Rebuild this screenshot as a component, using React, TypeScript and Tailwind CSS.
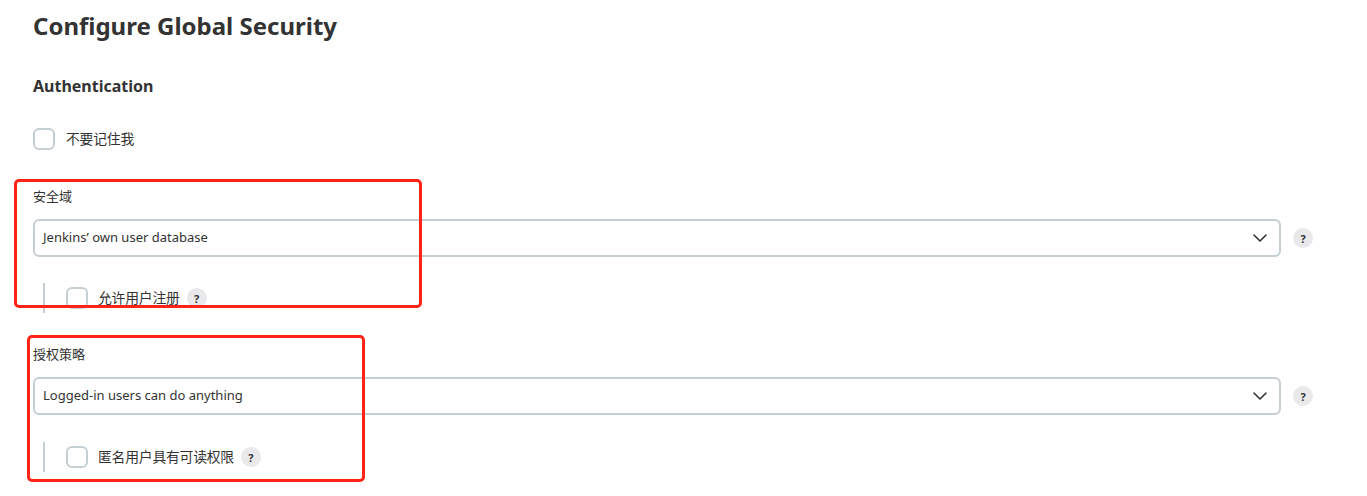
import React from "react";

const font = { fontFamily: '"Noto Sans", "Noto Sans CJK SC", sans-serif' };

function Help({ className = "" }: { className?: string }) {
  return (
    <span
      className={`inline-flex h-[20px] w-[20px] shrink-0 items-center justify-center rounded-full bg-[#e9e9eb] text-[11px] font-bold leading-none text-[#333] ${className}`}
    >
      ?
    </span>
  );
}

function Checkbox() {
  return <span className="inline-block h-[22px] w-[22px] shrink-0 rounded-[6px] border-2 border-[#c5ced3] bg-white" />;
}

function Select({ value }: { value: string }) {
  return (
    <div className="flex items-center gap-[12px]">
      <div className="flex h-[38px] w-[1248px] items-center justify-between rounded-[6px] border-2 border-[#c5ced3] bg-white pl-[8px] pr-[12px]">
        <span className="text-[13px] text-[#333]">{value}</span>
        <svg width="14" height="8" viewBox="0 0 14 8" fill="none">
          <path d="M1 1l6 6 6-6" stroke="#333" strokeWidth="1.6" strokeLinecap="round" strokeLinejoin="round" />
        </svg>
      </div>
      <Help />
    </div>
  );
}

function SubRow({ label }: { label: string }) {
  return (
    <div className="flex h-[30px] items-stretch">
      <div className="ml-[10px] w-[2px] bg-[#c5ced3]" />
      <div className="ml-[21px] flex items-center">
        <Checkbox />
        <span className="ml-[10px] text-[13.8px] tracking-[-0.2px] text-[#333]">{label}</span>
        <Help className="ml-[7px]" />
      </div>
    </div>
  );
}

export default function App() {
  return (
    <div className="relative h-[496px] w-[1367px] overflow-hidden bg-white" style={font}>
      <div className="pl-[33px] pt-[8px]">
        <h1 className="text-[24px] font-bold leading-[36px] text-[#333]">Configure Global Security</h1>
        <h2 className="mt-[30px] text-[16px] font-bold leading-[24px] text-[#333]">Authentication</h2>
        <div className="mt-[30px] flex items-center">
          <Checkbox />
          <span className="ml-[11px] text-[13.8px] tracking-[-0.2px] text-[#333]">不要记住我</span>
        </div>
        <div className="mt-[36px] text-[13px] leading-[20px] text-[#333]">安全域</div>
        <div className="mt-[13px]">
          <Select value="Jenkins’ own user database" />
        </div>
        <div className="mt-[26px]">
          <SubRow label="允许用户注册" />
        </div>
        <div className="mt-[31px] text-[13px] leading-[20px] text-[#333]">授权策略</div>
        <div className="mt-[13px]">
          <Select value="Logged-in users can do anything" />
        </div>
        <div className="mt-[27px]">
          <SubRow label="匿名用户具有可读权限" />
        </div>
      </div>
      <div className="pointer-events-none absolute left-[14px] top-[179px] h-[129px] w-[408px] rounded-[5px] border-[3px] border-[#ff2318]" />
      <div className="pointer-events-none absolute left-[27px] top-[335px] h-[147px] w-[338px] rounded-[5px] border-[3px] border-[#ff2318]" />
    </div>
  );
}
